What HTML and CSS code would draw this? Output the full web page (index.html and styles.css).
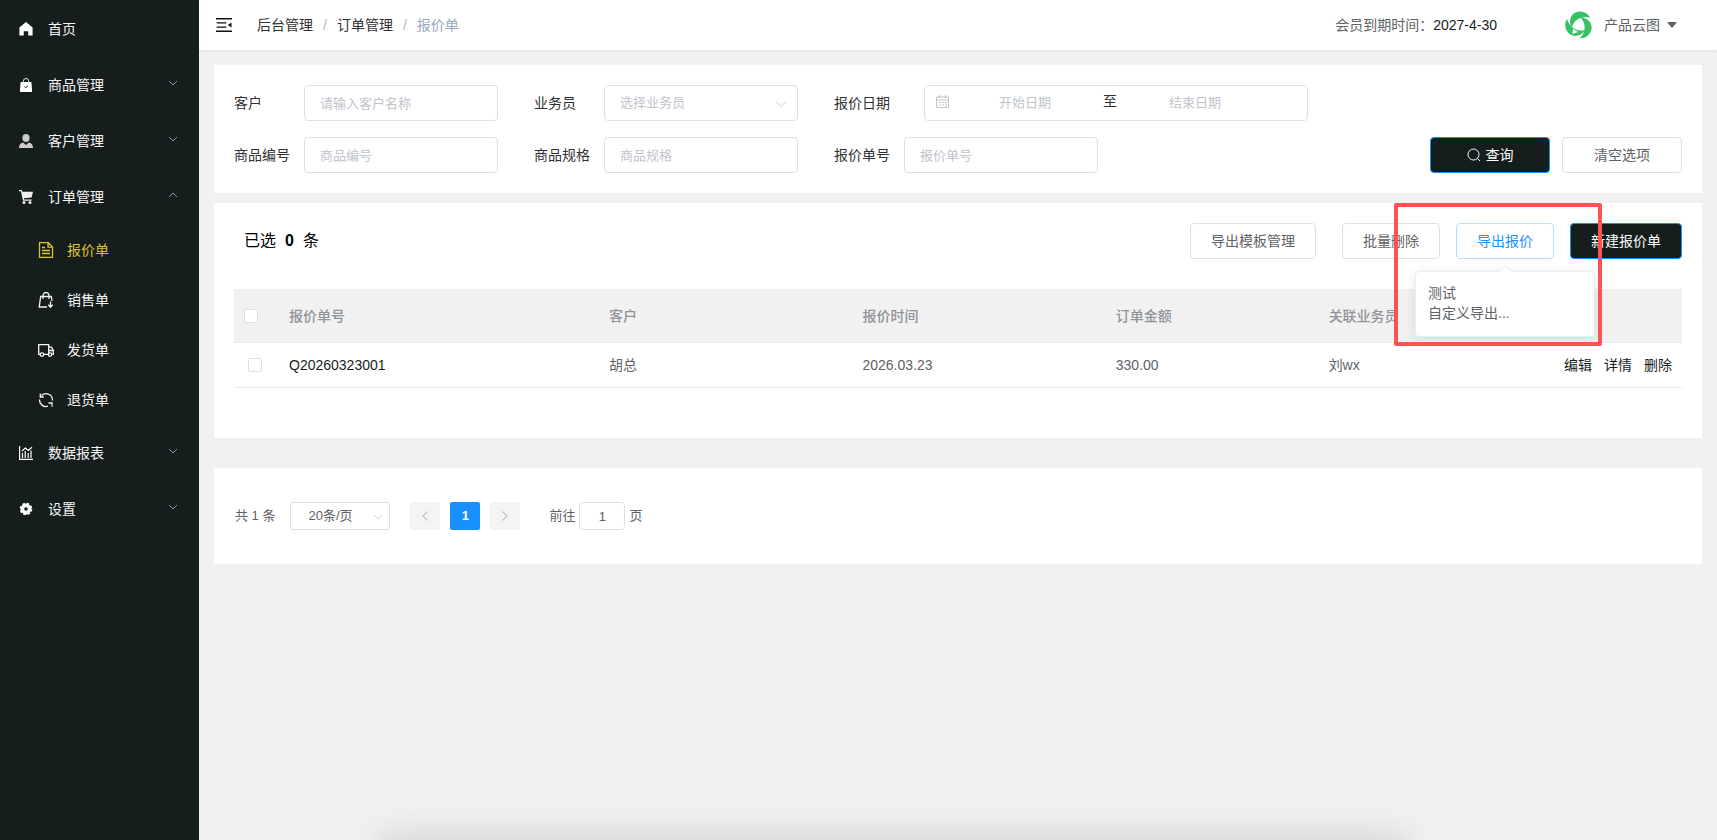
FILE: index.html
```html
<!DOCTYPE html>
<html lang="zh-CN">
<head>
  <meta charset="UTF-8" />
  <meta name="viewport" content="width=device-width, initial-scale=1.0" />
  <title>报价单</title>
  <link rel="stylesheet" href="styles.css">
</head>
<body>
  <nav class="sidebar">
    <a class="menu-item" href="#">
      <svg class="menu-icon" viewBox="0 0 14 14"><path fill="#fff" d="M7 0 13.6 5.4V13.6H9.2V9.2H4.8v4.4H.4V5.4z"/></svg>
      <span>首页</span>
    </a>
    <a class="menu-item" href="#">
      <svg class="menu-icon" viewBox="0 0 14 14"><path fill="#fff" d="M2.2 4h9.6q.6 0 .7.6l.6 8.7q0 .7-.7.7H1.6q-.7 0-.7-.7l.6-8.7q.1-.6.7-.6z"/><path fill="none" stroke="#ddd" d="M4.3 4.2V3a2.7 2.5 0 0 1 5.4 0v1.2"/><path fill="none" stroke="#161e1d" d="M5.3 8.4 6.7 9.8 9 7.6"/></svg>
      <span>商品管理</span>
      <svg class="arrow" viewBox="0 0 10 6"><path d="m1 1 4 4 4-4"/></svg>
    </a>
    <a class="menu-item" href="#">
      <svg class="menu-icon" viewBox="0 0 14 14"><path fill="#ccc" d="M7 0a3.6 3.9 0 1 1 0 7.8A3.6 3.9 0 0 1 7 0zM4 8.6 7 11l3-2.4q4 .9 4 5.4H0q0-4.5 4-5.4z"/></svg>
      <span>客户管理</span>
      <svg class="arrow" viewBox="0 0 10 6"><path d="m1 1 4 4 4-4"/></svg>
    </a>
    <a class="menu-item" href="#">
      <svg class="menu-icon" viewBox="0 0 14 14"><path fill="#eee" d="M0 0h2.7l.7 1.7H14l-1.4 5.8-7.8.8.3 1.2h7.5v1.3H4L1.9 1.3H0z"/><circle cx="5" cy="12.4" r="1.5" fill="#eee"/><circle cx="11" cy="12.4" r="1.5" fill="#eee"/></svg>
      <span>订单管理</span>
      <svg class="arrow" viewBox="0 0 10 6"><path d="m1 5 4-4 4 4"/></svg>
    </a>

    <div class="sub-menu">
      <a class="sub-item active" href="#">
        <svg class="sub-icon" viewBox="0 0 16 16"><path d="M1.5.7h8.8l4.200 4.200v10.400h-13zM10 .7V5.200h4.500M4 5.500h3M4 8.500h8M4 11.500h8"/></svg>
        <span>报价单</span>
      </a>
      <a class="sub-item" href="#">
        <svg class="sub-icon" viewBox="0 0 16 16"><path d="M9 15H1.2L2.7 4.5h10.6L14 9M5 7V3.5a3 3 0 0 1 6 0V7M12.5 9.5V15M10.3 12.800l2.200 2.400 2.200-2.400"/></svg>
        <span>销售单</span>
      </a>
      <a class="sub-item" href="#">
        <svg class="sub-icon" viewBox="0 0 16 16"><path d="M2 12.3H.7V2.700h10v9.600H6M10.700 5.200h2.800l1.800 3.200v3.900h-1.200M11 8.500h4"/><circle cx="4" cy="12.600" r="1.800"/><circle cx="12" cy="12.600" r="1.800"/></svg>
        <span>发货单</span>
      </a>
      <a class="sub-item" href="#">
        <svg class="sub-icon" viewBox="0 0 16 16"><path d="M1.500 7.500A6.500 6.500 0 0 0 10 14.200M14.500 8.500A6.500 6.500 0 0 0 3.500 3.500M2.300 1.500v3.500h3.500M10.500 11h3.500v3.500"/></svg>
        <span>退货单</span>
      </a>
    </div>

    <a class="menu-item" href="#">
      <svg class="menu-icon" viewBox="0 0 14 14"><path fill="none" stroke="#fff" stroke-width="1.200" d="M.6 0v13.400H14M3.500 12V7M6.200 12V5M9.200 12V7M12 12V4.500M3 5l3.300-3 3 2.500L13 1.200"/></svg>
      <span>数据报表</span>
      <svg class="arrow" viewBox="0 0 10 6"><path d="m1 1 4 4 4-4"/></svg>
    </a>
    <a class="menu-item" href="#">
      <svg class="menu-icon" viewBox="0 0 14 14"><circle cx="7" cy="7" r="3.600" fill="none" stroke="#fff" stroke-width="3.600"/><circle cx="7" cy="7" r="5.400" fill="none" stroke="#fff" stroke-width="1.800" stroke-dasharray="2.500 1.740"/></svg>
      <span>设置</span>
      <svg class="arrow" viewBox="0 0 10 6"><path d="m1 1 4 4 4-4"/></svg>
    </a>
  </nav>

  <div class="container">
    <header class="top-bar">
      <button class="collapse-btn" type="button" aria-label="收起菜单">
        <svg viewBox="0 0 16 14"><path stroke="#111" stroke-width="1.400" d="M0 .7h16M.7 4.900h9.600M.7 9.100h9.600M0 13.300h16"/><path fill="#111" d="M11.800 7 15.500 4.500v5z"/></svg>
      </button>
      <div class="breadcrumb">
        <a href="#">后台管理</a><i>/</i><a href="#">订单管理</a><i>/</i><span>报价单</span>
      </div>
      <div class="expire">会员到期时间：<b>2027-4-30</b></div>
      <button class="user" type="button">
        <svg class="avatar" viewBox="0 0 28 28">
          <g fill="#35c264">
            <path d="M6.500 17C2.800 9 6.500.8 14.500.5 19 .4 23 2.500 25.300 6.800 18.500 4.500 9.500 7 6.500 17z"/>
            <path transform="rotate(120 14 14)" d="M6.500 17C2.800 9 6.500.8 14.500.5 19 .4 23 2.500 25.300 6.800 18.500 4.500 9.500 7 6.500 17z"/>
            <path transform="rotate(240 14 14)" d="M6.500 17C2.800 9 6.500.8 14.500.5 19 .4 23 2.500 25.300 6.800 18.500 4.500 9.500 7 6.500 17z"/>
          </g>
          <path fill="#fff" d="m7.500 23 .5-5 5 3z"/>
        </svg>
        <span>产品云图</span>
        <svg class="caret" viewBox="0 0 10 6"><path d="M1 0h8q1 0 .4.800L5.500 5.500q-.5.500-1 0L.6.800Q0 0 1 0z"/></svg>
      </button>
    </header>

    <main>
      <form class="card search-form">
        <div class="form-row">
          <div class="field">
            <label for="customer">客户</label>
            <input type="text" id="customer" placeholder="请输入客户名称" />
          </div>
          <div class="field">
            <label for="salesman">业务员</label>
            <div class="select-box">
              <select id="salesman"><option>选择业务员</option></select>
              <svg class="select-arrow" viewBox="0 0 10 6"><path d="m0 .5 5 5 5-5"/></svg>
            </div>
          </div>
          <div class="field">
            <label class="date-label" for="startDate">报价日期</label>
            <div class="date-range">
              <svg viewBox="0 0 14 14"><path d="M.5 2h12v10.500H.5zM.5 5h12M3.500 0v3M9.500 0v3"/><path stroke-dasharray="2 1" d="M3 7.500h8M3 10h8"/></svg>
              <input type="text" id="startDate" placeholder="开始日期" />
              <span>至</span>
              <input type="text" aria-label="结束日期" placeholder="结束日期" />
            </div>
          </div>
        </div>
        <div class="form-row">
          <div class="field">
            <label for="goodsNo">商品编号</label>
            <input type="text" id="goodsNo" placeholder="商品编号" />
          </div>
          <div class="field">
            <label for="goodsSpec">商品规格</label>
            <input type="text" id="goodsSpec" placeholder="商品规格" />
          </div>
          <div class="field">
            <label for="quoteNo">报价单号</label>
            <input type="text" id="quoteNo" placeholder="报价单号" />
          </div>
          <div class="form-btns">
            <button class="btn btn-dark" type="button">
              <svg viewBox="0 0 14 14"><circle cx="6.500" cy="6.500" r="5.500"/><path d="m10.500 10.500 2.500 2.500"/></svg>
              查询
            </button>
            <button class="btn" type="reset">清空选项</button>
          </div>
        </div>
      </form>

      <section class="card list-card">
        <div class="toolbar">
          <div class="selected">已选<b>0</b>条</div>
          <button class="btn btn-template" type="button">导出模板管理</button>
          <button class="btn" type="button">批量删除</button>
          <div class="export">
            <button class="btn btn-plain" type="button">导出报价</button>
            <div class="popover">
              <a href="#">测试</a>
              <a href="#">自定义导出...</a>
            </div>
            <div class="highlight"></div>
          </div>
          <button class="btn btn-dark" type="button">新建报价单</button>
        </div>

        <table>
          <thead>
            <tr>
              <th class="col-check"><input type="checkbox" aria-label="全选" /></th>
              <th class="col-no">报价单号</th>
              <th class="col-mid">客户</th>
              <th class="col-mid">报价时间</th>
              <th class="col-amount">订单金额</th>
              <th>关联业务员</th>
            </tr>
          </thead>
          <tbody>
            <tr>
              <td class="row-check"><input type="checkbox" aria-label="选择 Q20260323001" /></td>
              <td class="dark">Q20260323001</td>
              <td>胡总</td>
              <td>2026.03.23</td>
              <td>330.00</td>
              <td>
                <div class="last-cell">
                  <span>刘wx</span>
                  <div class="actions"><a href="#">编辑</a><a href="#">详情</a><a href="#">删除</a></div>
                </div>
              </td>
            </tr>
          </tbody>
        </table>
      </section>

      <section class="card pagination">
        <span class="total">共 1 条</span>
        <div class="select-box page-size">
          <select aria-label="每页条数"><option>20条/页</option></select>
          <svg class="select-arrow" viewBox="0 0 10 6"><path d="m0 .5 5 5 5-5"/></svg>
        </div>
        <div class="pager">
          <button type="button" aria-label="上一页" disabled><svg viewBox="0 0 6 10"><path d="M5.500.5 1 5l4.500 4.500"/></svg></button>
          <button type="button" class="current">1</button>
          <button type="button" aria-label="下一页" disabled><svg viewBox="0 0 6 10"><path d="M.5.500 5 5 .5 9.500"/></svg></button>
        </div>
        <label for="jump">前往</label>
        <input type="text" id="jump" value="1" />
        <span>页</span>
      </section>
    </main>
  </div>
  <div class="bottom-shadow"></div>
</body>
</html>
```
FILE: styles.css
```css
* {
  box-sizing: border-box;
  margin: 0;
  padding: 0;
}

body {
  font-family: "Liberation Sans", "Noto Sans CJK SC", sans-serif;
  font-size: 14px;
  line-height: 20px;
  color: #606266;
  background: #f1f1f1;
  min-height: 100vh;
  display: flex;
}

a {
  color: inherit;
  text-decoration: none;
}

button,
input,
select {
  font: inherit;
  color: inherit;
}

button {
  cursor: pointer;
}

svg {
  flex: none;
}

/* sidebar */
.sidebar {
  width: 199px;
  flex: none;
  padding-top: 1px;
  background: #161e1d;
  color: #f5f5f5;
}

.menu-item {
  height: 56px;
  padding: 0 21px 0 19px;
  display: flex;
  align-items: center;
  gap: 15px;
}

.menu-icon {
  width: 14px;
  height: 14px;
}

.arrow {
  width: 10px;
  height: 6px;
  margin: 0 0 4px auto;
  fill: none;
  stroke: #909399;
}

.sub-item {
  height: 50px;
  padding-left: 38px;
  display: flex;
  align-items: center;
  gap: 13px;
}

.sub-item.active {
  color: #d9c22f;
}

.sub-icon {
  width: 16px;
  height: 16px;
  fill: none;
  stroke: currentColor;
  stroke-width: 1.3;
}

/* header */
.container {
  flex: 1;
  min-width: 0;
}

.top-bar {
  height: 50px;
  padding: 0 40px 0 17px;
  display: flex;
  align-items: center;
  background: #fff;
  box-shadow: 0 1px 4px rgba(0, 21, 41, 0.08);
}

.collapse-btn {
  display: flex;
  background: none;
  border: none;
}

.collapse-btn svg {
  width: 16px;
  height: 14px;
}

.breadcrumb {
  margin-left: 25px;
  color: #97a8be;
}

.breadcrumb a {
  color: #303133;
}

.breadcrumb i {
  margin: 0 10px;
  font-style: normal;
  color: #b4b8c0;
}

.expire {
  margin-left: auto;
}

.expire b {
  font-weight: normal;
  color: #161e1d;
}

.user {
  margin-left: 68px;
  display: flex;
  align-items: center;
  background: none;
  border: none;
}

.avatar {
  width: 28px;
  height: 28px;
  margin-right: 11px;
}

.caret {
  width: 10px;
  height: 6px;
  margin-left: 7px;
  fill: #5a5e66;
}

main {
  padding: 15px;
}

.card {
  background: #fff;
  padding: 20px;
}

/* search */
.search-form {
  display: flex;
  flex-direction: column;
  gap: 16px;
  margin-bottom: 10px;
}

.form-row {
  display: flex;
  gap: 36px;
}

.field {
  display: flex;
  align-items: center;
}

.field label {
  width: 70px;
  color: #303133;
}

.field .date-label {
  width: 90px;
}

.field > input,
.select-box select {
  width: 194px;
  height: 36px;
  padding: 0 15px;
  border: 1px solid #dcdfe6;
  border-radius: 4px;
  background: #fff;
  font-size: 13px;
  outline: none;
}

input::placeholder,
.select-box select {
  color: #c0c4cc;
}

.select-box {
  position: relative;
}

.select-box select {
  appearance: none;
}

.select-arrow {
  position: absolute;
  right: 12px;
  top: 50%;
  width: 10px;
  height: 6px;
  margin-top: -2px;
  fill: none;
  stroke: #c0c4cc;
  pointer-events: none;
}

.date-range {
  width: 384px;
  height: 36px;
  padding: 0 11px;
  display: flex;
  align-items: center;
  border: 1px solid #dcdfe6;
  border-radius: 4px;
}

.date-range svg {
  width: 14px;
  height: 14px;
  margin: 0 5px 2px 0;
  fill: none;
  stroke: #c0c4cc;
}

.date-range input {
  width: 140px;
  border: none;
  outline: none;
  text-align: center;
  font-size: 13px;
}

.date-range span {
  width: 30px;
  padding-bottom: 4px;
  text-align: center;
  color: #303133;
}

.form-btns {
  margin-left: auto;
  display: flex;
  gap: 12px;
}

.form-btns .btn {
  width: 120px;
}

.btn {
  height: 36px;
  padding: 0 20px;
  display: flex;
  align-items: center;
  justify-content: center;
  gap: 5px;
  background: #fff;
  border: 1px solid #dcdfe6;
  border-radius: 4px;
  white-space: nowrap;
}

.btn svg {
  width: 14px;
  height: 14px;
  fill: none;
  stroke: currentColor;
}

.btn-dark {
  background: #161e1d;
  border-color: #1890ff;
  color: #fff;
}

.btn-plain {
  border-color: #badeff;
  color: #1890ff;
}

/* list */
.list-card {
  padding-bottom: 50px;
  margin-bottom: 30px;
}

.toolbar {
  display: flex;
  gap: 16px;
  margin-bottom: 30px;
}

.selected {
  margin: 0 auto 0 10px;
  line-height: 36px;
  font-size: 16px;
  color: #000;
}

.selected b {
  margin: 0 9px;
}

.btn-template {
  margin-right: 10px;
}

.export {
  position: relative;
}

.popover {
  position: absolute;
  top: 48px;
  left: -41px;
  z-index: 1;
  width: 180px;
  padding: 11px 12px 13px;
  background: #fff;
  border: 1px solid #ebeef5;
  border-radius: 4px;
  box-shadow: 0 2px 12px rgba(0, 0, 0, 0.1);
}

.popover a {
  display: block;
}

.popover::before {
  content: "";
  position: absolute;
  top: -5px;
  left: 50%;
  width: 8px;
  height: 8px;
  margin-left: -4px;
  background: #fff;
  border: 1px solid #ebeef5;
  border-width: 1px 0 0 1px;
  transform: rotate(45deg);
}

.highlight {
  position: absolute;
  top: -20px;
  left: -62px;
  z-index: 2;
  width: 208px;
  height: 143px;
  border: 4px solid #ff5252;
  border-radius: 2px;
  pointer-events: none;
}

table {
  width: 100%;
  table-layout: fixed;
  border-collapse: separate;
  border-spacing: 0;
}

th,
td {
  height: 45px;
  padding: 0 10px;
  border-bottom: 1px solid #e6eaf2;
  text-align: left;
}

th {
  height: 54px;
  background: #f1f1f1;
  color: #909399;
  font-weight: 500;
}

.col-check {
  width: 45px;
}

.col-no {
  width: 22.1%;
}

.col-mid {
  width: 17.5%;
}

.col-amount {
  width: 14.7%;
}

input[type="checkbox"] {
  display: block;
  appearance: none;
  width: 14px;
  height: 14px;
  background: #fff;
  border: 1px solid #dcdfe6;
  border-radius: 2px;
}

.row-check {
  padding-left: 14px;
}

.dark,
.actions {
  color: #161e1d;
}

.last-cell,
.actions {
  display: flex;
  justify-content: space-between;
}

.actions {
  gap: 12px;
}

/* pagination */
.pagination {
  height: 96px;
  padding: 0 21px;
  display: flex;
  align-items: center;
  font-size: 13px;
}

.total {
  margin-right: 15px;
}

.page-size select {
  width: 100px;
  height: 28px;
  padding: 0 17px;
  border-radius: 3px;
  color: #606266;
}

.page-size .select-arrow {
  right: 8px;
  width: 8px;
}

.pager {
  display: flex;
  gap: 10px;
  margin: 0 29px 0 20px;
}

.pager button {
  width: 30px;
  height: 28px;
  display: flex;
  align-items: center;
  justify-content: center;
  background: #f4f4f5;
  border: none;
  border-radius: 2px;
}

.pager svg {
  width: 6px;
  height: 10px;
  fill: none;
  stroke: #c0c4cc;
  stroke-width: 1.3;
}

.pager .current {
  background: #1890ff;
  color: #fff;
  font-weight: 700;
}

#jump {
  width: 46px;
  height: 28px;
  margin: 0 4px;
  border: 1px solid #dcdfe6;
  border-radius: 4px;
  text-align: center;
}

.bottom-shadow {
  position: fixed;
  left: 22%;
  right: 18%;
  bottom: -20px;
  height: 20px;
  box-shadow: 0 0 36px rgba(0, 0, 0, 0.2);
  pointer-events: none;
}
```
